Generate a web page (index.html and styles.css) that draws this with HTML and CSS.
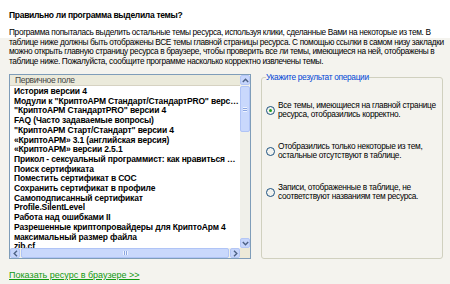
FILE: index.html
```html
<!DOCTYPE html>
<html lang="ru">
<head>
    <meta charset="UTF-8">
    <title>Проверка тем ресурса</title>
    <link rel="stylesheet" href="styles.css">
</head>
<body>
    <div class="page">
        <h1 class="title">Правильно ли программа выделила темы?</h1>
        <p class="intro">
            Программа попыталась выделить остальные темы ресурса, используя клики, сделанные Вами на некоторые из тем. В<br>
            таблице ниже должны быть отображены ВСЕ темы главной страницы ресурса. С помощью ссылки в самом низу закладки<br>
            можно открыть главную страницу ресурса в браузере, чтобы проверить все ли темы, имеющиеся на ней, отображены в<br>
            таблице ниже. Пожалуйста, сообщите программе насколько корректно извлечены темы.
        </p>

        <div class="main">
            <!-- Topics list -->
            <div class="listbox">
                <div class="list-view">
                    <div class="list-header">Первичное поле</div>
                    <ul class="list-items">
                        <li>История версии 4</li>
                        <li>Модули к "КриптоАРМ Стандарт/СтандартPRO" версии 4</li>
                        <li>"КриптоАРМ СтандартPRO" версии 4</li>
                        <li>FAQ (Часто задаваемые вопросы)</li>
                        <li>"КриптоАРМ Старт/Стандарт" версии 4</li>
                        <li>«КриптоАРМ» 3.1 (английская версия)</li>
                        <li>«КриптоАРМ» версии 2.5.1</li>
                        <li>Прикол - сексуальный программист: как нравиться девушкам</li>
                        <li>Поиск сертификата</li>
                        <li>Поместить сертификат в СОС</li>
                        <li>Сохранить сертификат в профиле</li>
                        <li>Самоподписанный сертификат</li>
                        <li>Profile.SilentLevel</li>
                        <li>Работа над ошибками II</li>
                        <li>Разрешенные криптопровайдеры для КриптоАрм 4</li>
                        <li>максимальный размер файла</li>
                        <li>zib.cf</li>
                    </ul>
                </div>

                <div class="vscroll">
                    <div class="sb-btn">
                        <svg width="7" height="5" viewBox="0 0 7 5"><polyline points="0.8,4 3.5,1.2 6.2,4" fill="none" stroke="#4d6185" stroke-width="1.4"/></svg>
                    </div>
                    <div class="vtrack">
                        <div class="vthumb"><span class="grip-h"></span></div>
                    </div>
                    <div class="sb-btn">
                        <svg width="7" height="5" viewBox="0 0 7 5"><polyline points="0.8,1 3.5,3.8 6.2,1" fill="none" stroke="#4d6185" stroke-width="1.4"/></svg>
                    </div>
                </div>

                <div class="hscroll">
                    <div class="sb-btn">
                        <svg width="5" height="7" viewBox="0 0 5 7"><polyline points="4,0.8 1.2,3.5 4,6.2" fill="none" stroke="#4d6185" stroke-width="1.4"/></svg>
                    </div>
                    <div class="htrack">
                        <div class="hthumb"><span class="grip-v"></span></div>
                    </div>
                    <div class="sb-btn">
                        <svg width="5" height="7" viewBox="0 0 5 7"><polyline points="1,0.8 3.8,3.5 1,6.2" fill="none" stroke="#4d6185" stroke-width="1.4"/></svg>
                    </div>
                </div>

                <div class="sb-corner"></div>
            </div>

            <!-- Result choice -->
            <fieldset class="result">
                <legend>Укажите результат операции</legend>
                <div class="option">
                    <span class="radio checked"></span>
                    <span>Все темы, имеющиеся на главной странице<br>ресурса, отобразились корректно.</span>
                </div>
                <div class="option">
                    <span class="radio"></span>
                    <span>Отобразились только некоторые из тем,<br>остальные отсутствуют в таблице.</span>
                </div>
                <div class="option">
                    <span class="radio"></span>
                    <span>Записи, отображенные в таблице, не<br>соответствуют названиям тем ресурса.</span>
                </div>
            </fieldset>
        </div>

        <a class="show-link" href="#">Показать ресурс в браузере &gt;&gt;</a>
    </div>
</body>
</html>
```

FILE: styles.css
```css
* {
    margin: 0;
    padding: 0;
    box-sizing: border-box;
}
body {
    font-family: "Liberation Sans", Arial, sans-serif;
    font-size: 8.5px;
    letter-spacing: -0.35px;
    color: #000;
    background: linear-gradient(#ffffff 0, #ffffff 38px, #f4f3ee 38px);
    min-height: 284px;
}
.page {
    padding: 10px 7px 0 9px;
}
.title {
    font-size: 8.5px;
    font-weight: bold;
    letter-spacing: -0.3px;
    line-height: 10px;
}
.intro {
    margin-top: 8px;
    font-size: 8.3px;
    line-height: 9.5px;
    white-space: nowrap;
}

/* ============= List + result box ========= */
.main {
    display: flex;
    gap: 10px;
    margin-top: 8px;
    height: 185px;
}
.listbox {
    flex: 0 0 242px;
    width: 242px;
    height: 185px;
    border: 1px solid #7f9db9;
    background: #fff;
    display: grid;
    grid-template-columns: minmax(0, 1fr) 10px;
    grid-template-rows: minmax(0, 1fr) 10px;
}
.list-view {
    overflow: hidden;
    min-width: 0;
    min-height: 0;
}
.list-header {
    height: 11px;
    line-height: 10px;
    padding-left: 5px;
    color: #444;
    background: #ebeadb;
    border-bottom: 1px solid #d6d2c2;
}
.list-items {
    list-style: none;
    margin-top: 1px;
}
.list-items li {
    font-weight: bold;
    letter-spacing: -0.15px;
    line-height: 9.7px;
    padding-left: 4px;
    white-space: nowrap;
    overflow: hidden;
    text-overflow: ellipsis;
}

/* scrollbars */
.vscroll {
    display: flex;
    flex-direction: column;
    min-height: 0;
    background: #f0f0ea;
}
.hscroll {
    display: flex;
    min-width: 0;
    background: #f0f0ea;
}
.sb-btn {
    flex: 0 0 10px;
    height: 10px;
    width: 10px;
    display: flex;
    align-items: center;
    justify-content: center;
    background: #c6d5fb;
    border: 1px solid #b4c6f5;
    border-radius: 2px;
}
.vtrack {
    flex: 1;
    padding-top: 1px;
}
.vthumb {
    height: 46px;
    background: #c9d8fc;
    border: 1px solid #b0c4f6;
    border-radius: 2px;
    display: flex;
    align-items: center;
    justify-content: center;
}
.grip-h {
    width: 4px;
    height: 5px;
    background: repeating-linear-gradient(#eef3ff 0, #eef3ff 1px, #8ca6e0 1px, #8ca6e0 2px);
}
.htrack {
    flex: 1;
    padding: 0 1px;
}
.hthumb {
    height: 10px;
    background: #c9d8fc;
    border: 1px solid #b0c4f6;
    border-radius: 2px;
    display: flex;
    align-items: center;
    justify-content: center;
}
.grip-v {
    width: 5px;
    height: 4px;
    background: repeating-linear-gradient(90deg, #eef3ff 0, #eef3ff 1px, #8ca6e0 1px, #8ca6e0 2px);
}
.sb-corner {
    background: #ece9d8;
}

/* result group */
.result {
    flex: 0 0 182px;
    min-width: 0;
    margin-top: -2px;
    border: 1px solid #d0d0bf;
    border-radius: 3px;
    padding: 18.5px 4px 0 4px;
    display: flex;
    flex-direction: column;
    gap: 22px;
    font-size: 8.3px;
    letter-spacing: -0.3px;
}
.result legend {
    color: #0046d5;
    line-height: 10px;
    padding: 0;
}
.option {
    display: flex;
    align-items: center;
    gap: 3px;
    line-height: 9.5px;
    white-space: nowrap;
}
.radio {
    flex: 0 0 9px;
    width: 9px;
    height: 9px;
    border: 1px solid #1c5180;
    border-radius: 50%;
    background: #f3f3ef;
    display: flex;
    align-items: center;
    justify-content: center;
}
.radio.checked::after {
    content: "";
    width: 3px;
    height: 3px;
    border-radius: 50%;
    background: #21a121;
}

.show-link {
    display: inline-block;
    margin-top: 11px;
    font-size: 9px;
    letter-spacing: 0;
    line-height: 11px;
    color: #119911;
    text-decoration: underline;
}
```
